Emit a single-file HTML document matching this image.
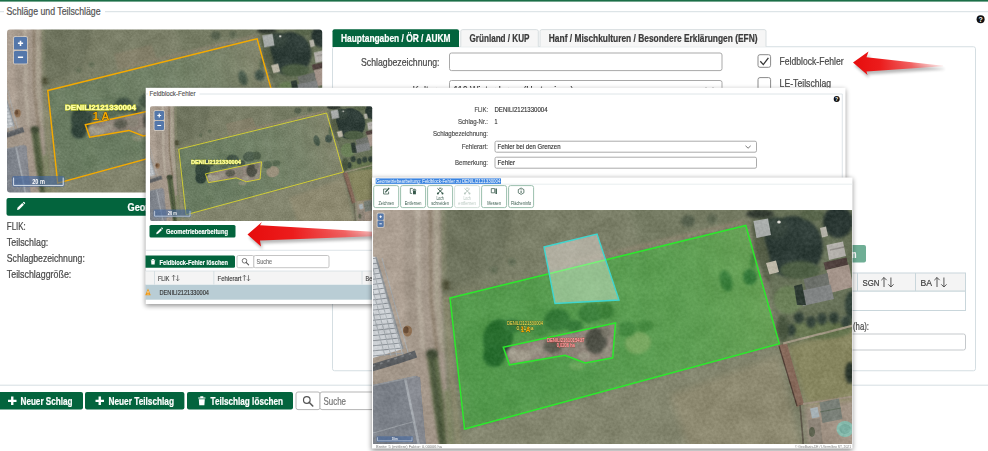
<!DOCTYPE html>
<html lang="de"><head><meta charset="utf-8"><title>Schläge und Teilschläge</title>
<style>
html,body{margin:0;padding:0;background:#fff;overflow:hidden}
svg{display:block;font-family:"Liberation Sans",sans-serif}
</style></head><body>
<svg width="988" height="451" viewBox="0 0 988 451">
<defs>
<filter id="b3" x="-10%" y="-10%" width="120%" height="120%" color-interpolation-filters="sRGB"><feGaussianBlur stdDeviation="3.2"/></filter>
<filter id="b15" x="-10%" y="-10%" width="120%" height="120%" color-interpolation-filters="sRGB"><feGaussianBlur stdDeviation="1.5"/></filter>
<filter id="b07" x="-10%" y="-10%" width="120%" height="120%" color-interpolation-filters="sRGB"><feGaussianBlur stdDeviation="0.7"/></filter>
<filter id="noise" x="0" y="0" width="100%" height="100%" color-interpolation-filters="sRGB"><feTurbulence type="fractalNoise" baseFrequency="0.33" numOctaves="2" seed="7" result="t"/><feColorMatrix in="t" type="matrix" values="1 0 0 0 0  1 0 0 0 0  1 0 0 0 0  0 0 0 0 1" result="n"/><feTurbulence type="fractalNoise" baseFrequency="0.05" numOctaves="2" seed="11" result="t2"/><feColorMatrix in="t2" type="matrix" values="1 0 0 0 0  1 0 0 0 0  1 0 0 0 0  0 0 0 0 1" result="n2"/><feComposite in="SourceGraphic" in2="n" operator="arithmetic" k1="0" k2="1" k3="0.11" k4="-0.055" result="c1"/><feComposite in="c1" in2="n2" operator="arithmetic" k1="0" k2="1" k3="0.09" k4="-0.045"/></filter>
<linearGradient id="pg" gradientUnits="userSpaceOnUse" x1="455" y1="360" x2="775" y2="280"><stop offset="0" stop-color="#6b7d62"/><stop offset="0.45" stop-color="#718167"/><stop offset="0.75" stop-color="#78836a"/><stop offset="1" stop-color="#86876f"/></linearGradient>
<g id="scene" filter="url(#noise)">
<g filter="url(#b3)">
<rect x="330" y="180" width="560" height="300" fill="#7b7f68"/>
<polygon points="440,180 520,180 500,270 445,290" fill="#666c55" opacity="0.55"/>
<polygon points="620,180 760,180 745,222 640,245" fill="#6e765d" opacity="0.4"/>
<polygon points="440,437 779,343.6 812,480 440,480" fill="#84866f"/>
<polygon points="670,395 779,355 808,480 700,480" fill="#908970" opacity="0.75"/>
<polygon points="745,180 890,180 890,345 781,347" fill="#687259"/>
<polygon points="786,345 890,318 890,396 806,406" fill="#86855f"/>
<polygon points="804,406 890,394 890,480 812,480" fill="#a09284"/>
</g>
<g filter="url(#b15)">
<polygon points="450,298 745.75,225.5 779.3,343.6 464.6,429" fill="url(#pg)"/>
<polygon points="455,330 560,300 600,380 470,420" fill="#687a60" opacity="0.55"/>
<path d="M560,266 L745,221.5" stroke="#8f8672" stroke-width="4" fill="none" opacity="0.8"/>
<polygon points="544,247 597,234 606,258 550,272" fill="#8a7f6a" opacity="0.55"/>
<path d="M452,295 L590,261" stroke="#80836b" stroke-width="3" fill="none" opacity="0.7"/>
<polygon points="330,180 441,180 442,300 452,480 330,480" fill="#a29689"/>
<polygon points="330,180 402,180 406,345 330,360" fill="#ada093"/>
<path d="M417,180 L419,300 L424,360" stroke="#b3a99b" stroke-width="5" fill="none"/>
<path d="M430,180 L431,300 L437,352" stroke="#80735f" stroke-width="2.2" fill="none"/>
<path d="M436,180 L437,300 L443,352" stroke="#a8a18f" stroke-width="5" fill="none"/>
<path d="M443,180 L444,290" stroke="#80826a" stroke-width="5" fill="none"/>
<path d="M446,296 L452,380 L462,480" stroke="#8c8b70" stroke-width="6" fill="none"/>
<polygon points="414,352 430,350 444,480 424,480" fill="#a39689"/>
</g>
<g filter="url(#b15)">
<polygon points="503.3,347.2 615.5,323 612.7,357.8 585.2,363 565,355.2 509.5,364.8" fill="#8f857a"/>
<ellipse cx="521" cy="356" rx="12" ry="6" fill="#a29c8d" transform="rotate(-10 521 356)"/>
<ellipse cx="512" cy="352" rx="5" ry="4" fill="#aaa596"/>
<ellipse cx="535" cy="350" rx="8" ry="4" fill="#948e80" transform="rotate(-10 535 350)"/>
<ellipse cx="553" cy="346" rx="10" ry="7" fill="#5f6054" transform="rotate(-10 553 346)"/>
<ellipse cx="571" cy="344" rx="8" ry="7" fill="#8d887b"/>
<ellipse cx="596" cy="341" rx="11" ry="13" fill="#4d4f45"/>
<ellipse cx="606" cy="332" rx="5" ry="6" fill="#7a776a"/>
<ellipse cx="607" cy="352" rx="5" ry="5" fill="#918d7e"/>
<ellipse cx="584" cy="356" rx="6" ry="4" fill="#9a9687"/>
<ellipse cx="638" cy="343" rx="13" ry="11" fill="#9a907c" transform="rotate(-10 638 343)"/>
<ellipse cx="627" cy="329" rx="9" ry="8" fill="#556651"/>
<ellipse cx="645" cy="326" rx="8" ry="6" fill="#5d6d56"/>
<ellipse cx="498" cy="338" rx="15" ry="19" fill="#35473c" transform="rotate(15 498 338)"/>
<ellipse cx="494" cy="356" rx="11" ry="11" fill="#31433a"/>
<ellipse cx="512" cy="326" rx="9" ry="7" fill="#44554a"/>
<ellipse cx="557" cy="320" rx="13" ry="11" fill="#455649" transform="rotate(-12 557 320)"/>
<ellipse cx="591" cy="313" rx="13" ry="10" fill="#4a5b4a" transform="rotate(-10 591 313)"/>
<ellipse cx="606" cy="311" rx="8" ry="8" fill="#50604c"/>
<ellipse cx="574" cy="326" rx="9" ry="6" fill="#46564a"/>
<ellipse cx="540" cy="330" rx="9" ry="6" fill="#586a55"/>
<ellipse cx="577" cy="366" rx="8" ry="4" fill="#8d917a"/>
<ellipse cx="726" cy="281" rx="6" ry="11" fill="#48594a" transform="rotate(-15 726 281)"/>
<ellipse cx="750" cy="277" rx="7" ry="8" fill="#43544a"/>
<ellipse cx="753" cy="262" rx="3" ry="9" fill="#5a6a52"/>
<ellipse cx="688" cy="221" rx="7" ry="6" fill="#545f4c"/>
<ellipse cx="712" cy="219" rx="5" ry="5" fill="#5a644f"/>
<ellipse cx="512" cy="262" rx="4" ry="4" fill="#616b54"/>
<ellipse cx="494" cy="270" rx="3.5" ry="4" fill="#616b54"/>
<ellipse cx="446" cy="285" rx="4" ry="5.5" fill="#55563f"/>
<polygon points="426.5,352 437,350 443.5,400 447,445 451,480 443,480 439,445 432.5,400" fill="#5a6646"/>
<path d="M431,353 L437,400 L442.5,445 L446,480" stroke="#48533b" stroke-width="3.6" fill="none"/>
<ellipse cx="432" cy="354" rx="6" ry="5" fill="#454f3a"/>
<path d="M447,390 L451,445 L455,480" stroke="#848a6a" stroke-width="6" fill="none"/>
<ellipse cx="793" cy="247" rx="30" ry="31" fill="#2e3c37"/>
<ellipse cx="800" cy="270" rx="20" ry="9" fill="#4e5f45"/>
<ellipse cx="775" cy="228" rx="13" ry="11" fill="#35433b"/>
<ellipse cx="838" cy="222" rx="15" ry="16" fill="#2a3733"/>
<ellipse cx="812" cy="215" rx="12" ry="6" fill="#566349"/>
<ellipse cx="852" cy="305" rx="7" ry="14" fill="#33433a"/>
<ellipse cx="788" cy="300" rx="14" ry="14" fill="#6b8058"/>
<ellipse cx="818" cy="330" rx="34" ry="9" fill="#66754f"/>
<ellipse cx="799" cy="318" rx="5" ry="6" fill="#34433a"/>
<ellipse cx="811" cy="322" rx="5" ry="6" fill="#34433a"/>
<ellipse cx="822" cy="319" rx="5" ry="6" fill="#34433a"/>
<ellipse cx="834" cy="318" rx="5" ry="6" fill="#34433a"/>
<ellipse cx="846" cy="322" rx="5" ry="6" fill="#34433a"/>
<ellipse cx="791" cy="330" rx="5" ry="6" fill="#34433a"/>
<ellipse cx="783" cy="328" rx="6" ry="13" fill="#495640"/>
<ellipse cx="850" cy="373" rx="5" ry="11" fill="#2b362d"/>
<ellipse cx="760" cy="214" rx="14" ry="4.5" fill="#30382f"/>
<ellipse cx="762" cy="252" rx="6" ry="32" fill="#555e47" transform="rotate(-15 762 252)"/>
</g>
<g filter="url(#b07)">
<polygon points="778.5,345 787,343.5 804,404 797,407" fill="#86695a"/>
<path d="M779,346 L797,406" stroke="#4f3f36" stroke-width="1.2" fill="none"/>
<path d="M800,405 L803,440 L804,480" stroke="#5b5548" stroke-width="1.6" fill="none"/>
<path d="M783,343.5 L890,316" stroke="#a39a86" stroke-width="2.2" fill="none"/>
<path d="M803,404 L890,391" stroke="#9c8f7e" stroke-width="2" fill="none"/>
<polygon points="330,250 376,257 403,349 373,358 330,368" fill="#cdd1d5"/>
<path d="M330,265 L377.0,258" stroke="#8d9399" stroke-width="1.0" fill="none"/>
<path d="M330,270 L378.42,263" stroke="#8d9399" stroke-width="1.0" fill="none"/>
<path d="M330,275 L379.84,268" stroke="#8d9399" stroke-width="1.0" fill="none"/>
<path d="M330,280 L381.26,273" stroke="#8d9399" stroke-width="1.0" fill="none"/>
<path d="M330,285 L382.68,278" stroke="#8d9399" stroke-width="1.0" fill="none"/>
<path d="M330,290 L384.1,283" stroke="#8d9399" stroke-width="1.0" fill="none"/>
<path d="M330,295 L385.52,288" stroke="#8d9399" stroke-width="1.0" fill="none"/>
<path d="M330,300 L386.94,293" stroke="#8d9399" stroke-width="1.0" fill="none"/>
<path d="M330,305 L388.36,298" stroke="#8d9399" stroke-width="1.0" fill="none"/>
<path d="M330,310 L389.78,303" stroke="#8d9399" stroke-width="1.0" fill="none"/>
<path d="M330,315 L391.2,308" stroke="#8d9399" stroke-width="1.0" fill="none"/>
<path d="M330,320 L392.62,313" stroke="#8d9399" stroke-width="1.0" fill="none"/>
<path d="M330,325 L394.04,318" stroke="#8d9399" stroke-width="1.0" fill="none"/>
<path d="M330,330 L395.46,323" stroke="#8d9399" stroke-width="1.0" fill="none"/>
<path d="M330,335 L396.88,328" stroke="#8d9399" stroke-width="1.0" fill="none"/>
<path d="M330,340 L398.3,333" stroke="#8d9399" stroke-width="1.0" fill="none"/>
<path d="M330,345 L399.72,338" stroke="#8d9399" stroke-width="1.0" fill="none"/>
<path d="M330,350 L401.14,343" stroke="#8d9399" stroke-width="1.0" fill="none"/>
<path d="M330,355 L402.56,348" stroke="#8d9399" stroke-width="1.0" fill="none"/>
<path d="M330,360 L403.98,353" stroke="#8d9399" stroke-width="1.0" fill="none"/>
<path d="M358,258 L385,356" stroke="#a3a9ae" stroke-width="0.9" fill="none"/>
<path d="M364,258 L391,356" stroke="#a3a9ae" stroke-width="0.9" fill="none"/>
<path d="M370,258 L397,356" stroke="#a3a9ae" stroke-width="0.9" fill="none"/>
<path d="M376,258 L403,356" stroke="#a3a9ae" stroke-width="0.9" fill="none"/>
<path d="M382,258 L409,356" stroke="#a3a9ae" stroke-width="0.9" fill="none"/>
<path d="M376,257 L403,349" stroke="#8d9296" stroke-width="1.6" fill="none"/>
<path d="M330,380 L373,367.5 L398,360 L416,354" stroke="#5c5f62" stroke-width="7.5" fill="none"/>
<path d="M373,366 L414,352.5" stroke="#7a7d80" stroke-width="1.6" fill="none" stroke-dasharray="2.5 5"/>
<ellipse cx="407.5" cy="331" rx="4.5" ry="5.5" fill="#8e6f52"/>
<ellipse cx="406" cy="330" rx="2.6" ry="3.6" fill="#6b4f38"/>
<polygon points="330,389 373,385 416,376 420,377.5 421.3,395 425.7,443.6 429,480 330,480" fill="#7c8189"/>
<polygon points="405,378.5 416,376 420,377.5 421.3,395 425.7,443.6 429,480 426,480 418.6,443.6 408.5,395" fill="#868990"/>
<path d="M405,378 L408.5,395 L418.6,443.6 L426,480" stroke="#a3a8ae" stroke-width="2.4" fill="none"/>
<path d="M373,433 L414,421.5" stroke="#979ca2" stroke-width="1.2" fill="none"/>
<path d="M330,390 L373,385.5 L416,376.5" stroke="#93979c" stroke-width="1.3" fill="none"/>
<polygon points="753.4,221 768,218.5 771,235 756.5,238" fill="#a9adab"/>
<polygon points="826.5,245 843,241.5 846,256 829,260" fill="#b3b0ab"/>
<path d="M830,250 L844,247" stroke="#8e8a86" stroke-width="1.5" fill="none"/>
<polygon points="823.5,262.5 846.5,257.5 848,265 825.5,270" fill="#4f403d"/>
<polygon points="826.5,270 849,264.5 853,287 830.5,293" fill="#a5958b"/>
<polygon points="803.5,279 827.5,273 830,287 806.5,292" fill="#6c706a"/>
<polygon points="799,291 830.5,284.5 834,299 803,306" fill="#828585"/>
<polygon points="794,286 802,284 806,305 797,305" fill="#2e3b33"/>
<polygon points="766,263 776,260.5 779,272 769.5,274.5" fill="#bdb8a8"/>
<polygon points="820,228 826,226.5 828,236 822,237.5" fill="#b5b3a9"/>
<ellipse cx="779" cy="222" rx="1.8" ry="1.5" fill="#d8d6cf"/>
<polygon points="819.5,402.5 839,398.5 842.5,419 822.5,423" fill="#7a8078"/>
<path d="M820,412 L841,408" stroke="#5f6b5b" stroke-width="1" fill="none"/>
<polygon points="810,408.5 817.5,407 819.5,417 812,418.5" fill="#a3aeb3"/>
<ellipse cx="845" cy="429" rx="8.5" ry="8" fill="#83b7a9"/>
<ellipse cx="845" cy="429" rx="5.5" ry="5" fill="#74a99c"/>
<polygon points="808,420 820,418 823,445 811,446" fill="#8c8377"/>
<ellipse cx="812" cy="432" rx="3" ry="5" fill="#5a5f4c"/>
</g>
</g>
<clipPath id="cm1"><rect x="7" y="29.5" width="315.2" height="162.9" rx="3"/></clipPath>
<clipPath id="cm2"><rect x="150" y="106.25" width="222.2" height="114.8" rx="2"/></clipPath>
<clipPath id="cm3"><rect x="373.5" y="210" width="478" height="234"/></clipPath>
<filter id="sh" x="-5%" y="-5%" width="110%" height="115%"><feGaussianBlur stdDeviation="2.5"/></filter>
<filter id="sh2" x="-20%" y="-50%" width="140%" height="220%"><feGaussianBlur stdDeviation="1.8"/></filter>
<linearGradient id="arr" gradientUnits="userSpaceOnUse" x1="853" y1="0" x2="943" y2="0"><stop offset="0" stop-color="#e60c0c"/><stop offset="0.3" stop-color="#ec1c1c"/><stop offset="0.65" stop-color="#f25454" stop-opacity="0.9"/><stop offset="1" stop-color="#f8b0b0" stop-opacity="0.35"/></linearGradient>
<linearGradient id="arr2" gradientUnits="userSpaceOnUse" x1="247" y1="0" x2="398" y2="0"><stop offset="0" stop-color="#e60c0c"/><stop offset="0.3" stop-color="#ec1c1c"/><stop offset="0.65" stop-color="#f25454" stop-opacity="0.9"/><stop offset="1" stop-color="#f8b0b0" stop-opacity="0.35"/></linearGradient>
</defs>
<rect x="0" y="0" width="988" height="451" fill="#fff"/>
<rect x="0" y="0" width="988" height="1.6" fill="#1b6e47"/>
<line x1="0" y1="11.7" x2="4" y2="11.7" stroke="#d5dee2" stroke-width="1"/>
<line x1="105" y1="11.7" x2="988" y2="11.7" stroke="#d5dee2" stroke-width="1"/>
<text x="6.5" y="15.2" font-size="10.06" fill="#555" textLength="94" lengthAdjust="spacingAndGlyphs" stroke="#555" stroke-width="0.221">Schläge und Teilschläge</text>
<circle cx="980.6" cy="19.3" r="4" fill="#111"/><text x="980.6" y="21.78" font-size="7.0" font-weight="bold" fill="#fff" text-anchor="middle">?</text>
<g clip-path="url(#cm1)">
<use href="#scene" transform="translate(-270.5,-120.7) scale(0.707)"/>
<polygon points="47.8,90.5 257.1,38.8 280.47,122.23 57.7,183.1" fill="none" stroke="#f4aa00" stroke-width="1.45"/>
<polygon points="85.33,124.77 164.66,107.66 162.68,132.26 143.24,135.94 128.95,130.43 89.72,137.21" fill="none" stroke="#f4aa00" stroke-width="1.45"/>
<text x="65" y="110.4" font-size="8" fill="#ffffb4" font-weight="bold" textLength="71" lengthAdjust="spacingAndGlyphs" stroke="#e2e230" stroke-width="0.9" paint-order="stroke">DENILI2121330004</text>
<text x="92.7" y="119.8" font-size="11" fill="#f5a800" font-weight="bold" textLength="16.6" lengthAdjust="spacingAndGlyphs" stroke="#4a3200" stroke-width="0.7" paint-order="stroke">1 A</text>
<rect x="12.2" y="176" width="52.4" height="10.8" fill="#3f66a2" rx="1.8" opacity="0.6"/>
<path d="M13.6,177.6 V185.4 H63.2 V177.6" fill="none" stroke="#e8eef5" stroke-width="0.9"/>
<text x="38.6" y="184.2" font-size="7" fill="#fff" font-weight="bold" text-anchor="middle" textLength="12.7" lengthAdjust="spacingAndGlyphs">20 m</text>
<rect x="13" y="36" width="15" height="28.599999999999998" rx="2" fill="#fff" opacity="0.4"/><rect x="14" y="37" width="13" height="12.6" rx="1.2" fill="#5477aa"/><rect x="14" y="51.0" width="13" height="12.6" rx="1.2" fill="#5477aa"/><path d="M17.9,43.3 H23.1 M20.5,40.699999999999996 V45.9" stroke="#fff" stroke-width="1.56"/><path d="M17.9,57.3 H23.1" stroke="#fff" stroke-width="1.56"/>
</g>
<rect x="6.5" y="198" width="320" height="17.8" fill="#03643d" rx="2"/>
<g transform="translate(16.5,202) scale(0.53125)" fill="#fff"><path d="M1,15 L1.8,11 L10.8,2 L14,5.2 L5,14.2 Z"/><path d="M11.8,1 L13,-0.2 Q13.8,-0.8 14.6,0 L16,1.4 Q16.8,2.2 16,3 L15,4.2 Z"/></g>
<text x="127.5" y="211" font-size="10.94" fill="#fff" font-weight="bold" textLength="98" lengthAdjust="spacingAndGlyphs" stroke="#fff" stroke-width="0.241">Geometriebearbeitung</text>
<text x="6.8" y="229.6" font-size="10.5" fill="#4a4a4a" textLength="19" lengthAdjust="spacingAndGlyphs" stroke="#4a4a4a" stroke-width="0.231">FLIK:</text>
<text x="6.8" y="245.79999999999998" font-size="10.5" fill="#4a4a4a" textLength="41.5" lengthAdjust="spacingAndGlyphs" stroke="#4a4a4a" stroke-width="0.231">Teilschlag:</text>
<text x="6.8" y="262.0" font-size="10.5" fill="#4a4a4a" textLength="78" lengthAdjust="spacingAndGlyphs" stroke="#4a4a4a" stroke-width="0.231">Schlagbezeichnung:</text>
<text x="6.8" y="278.2" font-size="10.5" fill="#4a4a4a" textLength="64.5" lengthAdjust="spacingAndGlyphs" stroke="#4a4a4a" stroke-width="0.231">Teilschlaggröße:</text>
<rect x="332.5" y="46.75" width="643" height="324" fill="#fff" stroke="#d5dee2" stroke-width="1" rx="2"/>
<path d="M332.5,47 V31.2 Q332.5,29.2 334.5,29.2 H457 Q459,29.2 459,31.2 V47 Z" fill="#03643d"/>
<text x="341" y="42.3" font-size="10.5" fill="#fff" font-weight="bold" textLength="109.5" lengthAdjust="spacingAndGlyphs" stroke="#fff" stroke-width="0.231">Hauptangaben / ÖR / AUKM</text>
<path d="M460.8,46.75 V31.2 Q460.8,29.6 462.8,29.6 H536.3 Q538.3,29.6 538.3,31.2 V46.75" fill="#f6f6f6" stroke="#d5dbde" stroke-width="0.9"/>
<text x="469.5" y="42.3" font-size="10.5" fill="#3a3a3a" font-weight="bold" textLength="60" lengthAdjust="spacingAndGlyphs" stroke="#3a3a3a" stroke-width="0.231">Grünland / KUP</text>
<path d="M540,46.75 V31.2 Q540,29.6 542,29.6 H764 Q766,29.6 766,31.2 V46.75" fill="#f6f6f6" stroke="#d5dbde" stroke-width="0.9"/>
<text x="548.8" y="42.3" font-size="10.5" fill="#3a3a3a" font-weight="bold" textLength="208.7" lengthAdjust="spacingAndGlyphs" stroke="#3a3a3a" stroke-width="0.231">Hanf / Mischkulturen / Besondere Erklärungen (EFN)</text>
<text x="439.5" y="66" font-size="10.94" fill="#4a4a4a" text-anchor="end" textLength="78.5" lengthAdjust="spacingAndGlyphs" stroke="#4a4a4a" stroke-width="0.241">Schlagbezeichnung:</text>
<rect x="449.5" y="53" width="272.5" height="17.6" fill="#fff" stroke="#a9a9a9" stroke-width="1" rx="2"/>
<text x="439.5" y="94" font-size="10.94" fill="#4a4a4a" text-anchor="end" textLength="27" lengthAdjust="spacingAndGlyphs" stroke="#4a4a4a" stroke-width="0.241">Kultur:</text>
<rect x="449.5" y="80.5" width="272.5" height="17.6" fill="#fff" stroke="#a9a9a9" stroke-width="1" rx="2"/>
<text x="453.5" y="94" font-size="10.94" fill="#333" textLength="120" lengthAdjust="spacingAndGlyphs" stroke="#333" stroke-width="0.241">110 Winterdurum (Hartweizen)</text>
<path d="M706,87.5 l3.5,3.5 l3.5,-3.5" fill="none" stroke="#555" stroke-width="1"/>
<rect x="758" y="54.7" width="12.6" height="12.6" fill="#fff" stroke="#8a8a8a" stroke-width="1" rx="2"/>
<path d="M760.3,61.3 L763.3,64.6 L768.4,57.8" fill="none" stroke="#333" stroke-width="1.3"/>
<text x="779.6" y="64.8" font-size="10.5" fill="#4a4a4a" textLength="64" lengthAdjust="spacingAndGlyphs" stroke="#4a4a4a" stroke-width="0.231">Feldblock-Fehler</text>
<rect x="758" y="77.6" width="12.6" height="12.6" fill="#fff" stroke="#8a8a8a" stroke-width="1" rx="2"/>
<text x="779.6" y="86.6" font-size="10.5" fill="#4a4a4a" textLength="51.5" lengthAdjust="spacingAndGlyphs" stroke="#4a4a4a" stroke-width="0.231">LE-Teilschlag</text>
<path d="M853,62.5 L868.5,51.6 L866.5,57.2 L943,65.7 L943,66.3 L866.5,71.6 L867.5,75 Z" fill="#000" opacity="0.28" filter="url(#sh2)" transform="translate(1.5,3)"/><path d="M853,62.5 L868.5,51.6 L866.5,57.2 L943,65.7 L943,66.3 L866.5,71.6 L867.5,75 Z" fill="url(#arr)"/>
<rect x="800" y="245" width="66" height="17.5" fill="#6fae95" rx="2"/>
<text x="856.5" y="258" font-size="10.5" fill="#fff" font-weight="bold" text-anchor="end" textLength="5" lengthAdjust="spacingAndGlyphs" stroke="#fff" stroke-width="0.231">n</text>
<rect x="780" y="273" width="185.5" height="18.2" fill="#f4f4f4" stroke="#c9d6db" stroke-width="1"/>
<line x1="857.5" y1="273" x2="857.5" y2="291.2" stroke="#c9d6db" stroke-width="1"/>
<line x1="915.5" y1="273" x2="915.5" y2="291.2" stroke="#c9d6db" stroke-width="1"/>
<text x="862.5" y="286.2" font-size="9.19" fill="#3f3f3f" textLength="17" lengthAdjust="spacingAndGlyphs" stroke="#3f3f3f" stroke-width="0.202">SGN</text>
<path d="M884,287.0 V277.5 M881.34,280.16 L884,277.5 L886.66,280.16  M890.916,277.5 V287.0 M888.256,284.34 L890.916,287.0 L893.576,284.34" fill="none" stroke="#444" stroke-width="0.9"/>
<text x="920.5" y="286.2" font-size="9.19" fill="#3f3f3f" textLength="11.5" lengthAdjust="spacingAndGlyphs" stroke="#3f3f3f" stroke-width="0.202">BA</text>
<path d="M937,287.0 V277.5 M934.34,280.16 L937,277.5 L939.66,280.16  M943.916,277.5 V287.0 M941.256,284.34 L943.916,287.0 L946.576,284.34" fill="none" stroke="#444" stroke-width="0.9"/>
<rect x="780" y="291.2" width="185.5" height="19.3" fill="#fff" stroke="#c9d6db" stroke-width="1"/>
<text x="853" y="330.2" font-size="10.5" fill="#4a4a4a" textLength="16" lengthAdjust="spacingAndGlyphs" stroke="#4a4a4a" stroke-width="0.231">(ha):</text>
<rect x="780" y="334" width="185.5" height="16" fill="#fff" stroke="#c5c9cc" stroke-width="1" rx="2"/>
<line x1="0" y1="385.2" x2="988" y2="385.2" stroke="#d5dee2" stroke-width="1"/>
<rect x="-3" y="392" width="86" height="17.6" fill="#03643d" rx="2"/>
<path d="M11.06,396.6 h2.3800000000000003 v3.0599999999999996 h3.0599999999999996 v2.3800000000000003 h-3.0599999999999996 v3.0599999999999996 h-2.3800000000000003 v-3.0599999999999996 h-3.0599999999999996 v-2.3800000000000003 h3.0599999999999996 Z" fill="#fff"/>
<text x="20.5" y="405.4" font-size="10.5" fill="#fff" font-weight="bold" textLength="52" lengthAdjust="spacingAndGlyphs" stroke="#fff" stroke-width="0.231">Neuer Schlag</text>
<rect x="85" y="392" width="99.4" height="17.6" fill="#03643d" rx="2"/>
<path d="M98.56,396.6 h2.3800000000000003 v3.0599999999999996 h3.0599999999999996 v2.3800000000000003 h-3.0599999999999996 v3.0599999999999996 h-2.3800000000000003 v-3.0599999999999996 h-3.0599999999999996 v-2.3800000000000003 h3.0599999999999996 Z" fill="#fff"/>
<text x="108.5" y="405.4" font-size="10.5" fill="#fff" font-weight="bold" textLength="65.5" lengthAdjust="spacingAndGlyphs" stroke="#fff" stroke-width="0.231">Neuer Teilschlag</text>
<rect x="187" y="392" width="106" height="17.6" fill="#03643d" rx="2"/>
<g transform="translate(197,395.6) scale(0.6)" fill="#fff"><path d="M2,3 H14 V5 H2 Z M5.5,1 H10.5 V3 H5.5 Z M3,6 H13 L12.3,16 H3.7 Z"/></g>
<text x="210.5" y="405.4" font-size="10.5" fill="#fff" font-weight="bold" textLength="72.5" lengthAdjust="spacingAndGlyphs" stroke="#fff" stroke-width="0.231">Teilschlag löschen</text>
<rect x="296" y="392" width="24" height="17.6" fill="#fff" stroke="#b5b5b5" stroke-width="1" rx="2"/>
<circle cx="306.8" cy="400" r="3.3" fill="none" stroke="#555" stroke-width="1.2"/><path d="M309.11,402.31 L312.74,405.94" stroke="#555" stroke-width="1.56" stroke-linecap="round"/>
<rect x="320" y="392" width="120" height="17.6" fill="#fff" stroke="#b5b5b5" stroke-width="1" rx="2"/>
<text x="323.5" y="405.4" font-size="10.06" fill="#777" textLength="22.5" lengthAdjust="spacingAndGlyphs" stroke="#777" stroke-width="0.221">Suche</text>
<defs><clipPath id="cp1"><rect x="145.5" y="87.5" width="700" height="216.5"/></clipPath></defs><rect x="145.5" y="89.5" width="700" height="216.5" fill="#000" opacity="0.42" filter="url(#sh)"/>
<rect x="145.7" y="87.8" width="699.8" height="216.2" fill="#fff"/>
<line x1="145.7" y1="94" x2="148" y2="94" stroke="#d5dee2" stroke-width="0.8"/>
<line x1="199.5" y1="94" x2="842.3" y2="94" stroke="#d5dee2" stroke-width="0.8"/>
<line x1="842.3" y1="94" x2="842.3" y2="250" stroke="#d5dee2" stroke-width="0.8"/>
<text x="149.5" y="96.3" font-size="7.26" fill="#555" textLength="46" lengthAdjust="spacingAndGlyphs" stroke="#555" stroke-width="0.16">Feldblock-Fehler</text>
<circle cx="836.7" cy="99" r="3" fill="#111"/><text x="836.7" y="100.86" font-size="5.25" font-weight="bold" fill="#fff" text-anchor="middle">?</text>
<g clip-path="url(#cm2)">
<use href="#scene" transform="translate(-46.25,0.25) scale(0.5)"/>
<polygon points="178.75,149.25 326.62,113.0 343.4,172.05 186.05,214.75" fill="none" stroke="#e6e02a" stroke-width="0.8"/>
<polygon points="205.4,173.85 261.5,161.75 260.1,179.15 246.35,181.75 236.25,177.85 208.5,182.65" fill="none" stroke="#e6e02a" stroke-width="0.8"/>
<text x="191" y="163.8" font-size="5.8" fill="#ffffb4" font-weight="bold" textLength="50" lengthAdjust="spacingAndGlyphs" stroke="#e2e230" stroke-width="0.55" paint-order="stroke">DENILI2121330004</text>
<rect x="153.6" y="209.6" width="37.4" height="7.6" fill="#3f66a2" rx="1.3" opacity="0.55"/>
<path d="M154.6,210.8 V216.2 H190 V210.8" fill="none" stroke="#e8eef5" stroke-width="0.65"/>
<text x="172.3" y="215.4" font-size="5" fill="#fff" font-weight="bold" text-anchor="middle" textLength="9" lengthAdjust="spacingAndGlyphs">20 m</text>
<rect x="153.5" y="110" width="11.5" height="21" rx="2" fill="#fff" opacity="0.4"/><rect x="154.5" y="111" width="9.5" height="9" rx="1.2" fill="#5477aa"/><rect x="154.5" y="121" width="9.5" height="9" rx="1.2" fill="#5477aa"/><path d="M157.35,115.5 H161.15 M159.25,113.6 V117.4" stroke="#fff" stroke-width="1.14"/><path d="M157.35,125.5 H161.15" stroke="#fff" stroke-width="1.14"/>
</g>
<text x="488" y="112.1" font-size="7.52" fill="#4a4a4a" text-anchor="end" textLength="13.5" lengthAdjust="spacingAndGlyphs" stroke="#4a4a4a" stroke-width="0.165">FLIK:</text>
<text x="494.5" y="112.1" font-size="7.52" fill="#333" textLength="53" lengthAdjust="spacingAndGlyphs" stroke="#333" stroke-width="0.165">DENILI2121330004</text>
<text x="488" y="123.7" font-size="7.52" fill="#4a4a4a" text-anchor="end" textLength="30" lengthAdjust="spacingAndGlyphs" stroke="#4a4a4a" stroke-width="0.165">Schlag-Nr.:</text>
<text x="494.5" y="123.7" font-size="7.52" fill="#333" textLength="3" lengthAdjust="spacingAndGlyphs" stroke="#333" stroke-width="0.165">1</text>
<text x="488" y="135.5" font-size="7.52" fill="#4a4a4a" text-anchor="end" textLength="55" lengthAdjust="spacingAndGlyphs" stroke="#4a4a4a" stroke-width="0.165">Schlagbezeichnung:</text>
<text x="488" y="149.1" font-size="7.52" fill="#4a4a4a" text-anchor="end" textLength="26.3" lengthAdjust="spacingAndGlyphs" stroke="#4a4a4a" stroke-width="0.165">Fehlerart:</text>
<rect x="495" y="141.2" width="261.5" height="11" fill="#fff" stroke="#a0a0a0" stroke-width="0.9" rx="1.5"/>
<text x="497.5" y="149.3" font-size="7.52" fill="#333" textLength="63" lengthAdjust="spacingAndGlyphs" stroke="#333" stroke-width="0.165">Fehler bei den Grenzen</text>
<path d="M745.5,145.8 l2.6,2.4 l2.6,-2.4" fill="none" stroke="#555" stroke-width="0.8"/>
<text x="488" y="164.8" font-size="7.52" fill="#4a4a4a" text-anchor="end" textLength="33" lengthAdjust="spacingAndGlyphs" stroke="#4a4a4a" stroke-width="0.165">Bemerkung:</text>
<rect x="495" y="157.2" width="261.5" height="11" fill="#fff" stroke="#a0a0a0" stroke-width="0.9" rx="1.5"/>
<text x="497.5" y="164.9" font-size="7.52" fill="#333" textLength="17.5" lengthAdjust="spacingAndGlyphs" stroke="#333" stroke-width="0.165">Fehler</text>
<rect x="149.5" y="225" width="86" height="12.5" fill="#03643d" rx="1.5"/>
<g transform="translate(155.8,227.6) scale(0.4375)" fill="#fff"><path d="M1,15 L1.8,11 L10.8,2 L14,5.2 L5,14.2 Z"/><path d="M11.8,1 L13,-0.2 Q13.8,-0.8 14.6,0 L16,1.4 Q16.8,2.2 16,3 L15,4.2 Z"/></g>
<text x="166" y="234.3" font-size="7.52" fill="#fff" font-weight="bold" textLength="62" lengthAdjust="spacingAndGlyphs" stroke="#fff" stroke-width="0.165">Geometriebearbeitung</text>
<line x1="145.5" y1="250.3" x2="845.5" y2="250.3" stroke="#d5dee2" stroke-width="0.8"/>
<rect x="143" y="255.5" width="92" height="12.2" fill="#03643d" rx="1.5" clip-path="url(#cp1)"/>
<g transform="translate(150,258.6) scale(0.375)" fill="#fff"><path d="M2,3 H14 V5 H2 Z M5.5,1 H10.5 V3 H5.5 Z M3,6 H13 L12.3,16 H3.7 Z"/></g>
<text x="159.5" y="264.6" font-size="7.52" fill="#fff" font-weight="bold" textLength="68.5" lengthAdjust="spacingAndGlyphs" stroke="#fff" stroke-width="0.165">Feldblock-Fehler löschen</text>
<rect x="237" y="255.5" width="17" height="12.2" fill="#fff" stroke="#b5b5b5" stroke-width="0.8" rx="1.5"/>
<circle cx="244.5" cy="260.8" r="2.3" fill="none" stroke="#555" stroke-width="0.8"/><path d="M246.11,262.41 L248.64,264.94" stroke="#555" stroke-width="1.04" stroke-linecap="round"/>
<rect x="253.8" y="255.5" width="75.2" height="12.2" fill="#fff" stroke="#b5b5b5" stroke-width="0.8" rx="1.5"/>
<text x="256.5" y="264.4" font-size="7.17" fill="#777" textLength="15.5" lengthAdjust="spacingAndGlyphs" stroke="#777" stroke-width="0.158">Suche</text>
<rect x="145.5" y="271" width="700" height="13.5" fill="#f4f4f4"/>
<line x1="145.5" y1="271" x2="845.5" y2="271" stroke="#d5dee2" stroke-width="0.8"/>
<line x1="154.5" y1="271" x2="154.5" y2="284.5" stroke="#d0dade" stroke-width="0.8"/>
<line x1="213.8" y1="271" x2="213.8" y2="284.5" stroke="#d0dade" stroke-width="0.8"/>
<line x1="362" y1="271" x2="362" y2="284.5" stroke="#d0dade" stroke-width="0.8"/>
<text x="158" y="280.6" font-size="6.65" fill="#3f3f3f" textLength="11.5" lengthAdjust="spacingAndGlyphs" stroke="#3f3f3f" stroke-width="0.146">FLIK</text>
<path d="M173.6,280.8 V275.2 M172.03199999999998,276.768 L173.6,275.2 L175.168,276.768  M177.6768,275.2 V280.8 M176.1088,279.232 L177.6768,280.8 L179.2448,279.232" fill="none" stroke="#444" stroke-width="0.65"/>
<text x="217.5" y="280.6" font-size="6.65" fill="#3f3f3f" textLength="24" lengthAdjust="spacingAndGlyphs" stroke="#3f3f3f" stroke-width="0.146">Fehlerart</text>
<path d="M244.4,280.8 V275.2 M242.832,276.768 L244.4,275.2 L245.96800000000002,276.768  M248.4768,275.2 V280.8 M246.9088,279.232 L248.4768,280.8 L250.0448,279.232" fill="none" stroke="#444" stroke-width="0.65"/>
<text x="365.5" y="280.6" font-size="6.65" fill="#3f3f3f" textLength="28" lengthAdjust="spacingAndGlyphs" stroke="#3f3f3f" stroke-width="0.146">Bemerkung</text>
<rect x="145.5" y="284.7" width="700" height="15" fill="#b9cdd5"/>
<path d="M145.2,295.2 L148,288.6 L150.8,295.2 Z" fill="#ee9a1c"/><path d="M148,291 V293.3 M148,294 v0.6" stroke="#fff" stroke-width="0.7"/>
<text x="159.5" y="295" font-size="6.83" fill="#333" textLength="49.5" lengthAdjust="spacingAndGlyphs" stroke="#333" stroke-width="0.15">DENILI2121330004</text>
<path d="M247.5,234.5 L262,222 L260,225.3 L373,231.8 L373,236.2 L260,240.5 L261,246.5 Z" fill="#000" opacity="0.28" filter="url(#sh2)" transform="translate(1.5,3)"/><path d="M247.5,234.5 L262,222 L260,225.3 L373,231.8 L373,236.2 L260,240.5 L261,246.5 Z" fill="url(#arr2)"/>
<rect x="371.5" y="178.5" width="481" height="272" fill="#000" opacity="0.45" filter="url(#sh)"/>
<rect x="372" y="177.5" width="480.5" height="271" fill="#fff"/>
<line x1="372" y1="184.2" x2="852.5" y2="184.2" stroke="#dfe7ea" stroke-width="0.7"/>
<rect x="375.7" y="178.4" width="125.3" height="5.5" fill="#3b84e0"/>
<text x="376.2" y="182.9" font-size="5.3" fill="#fff" textLength="124.2" lengthAdjust="spacingAndGlyphs">Geometriebearbeitung: Feldblock-Fehler zu DENILI2121330004</text>
<rect x="373.7" y="185.6" width="25" height="22" fill="#fff" stroke="#9bbfae" stroke-width="1" rx="2"/><text x="386.2" y="204.9" font-size="5.3" fill="#35584a" text-anchor="middle" textLength="15.5" lengthAdjust="spacingAndGlyphs">Zeichnen</text><path d="M386.7,189.0 H383.59999999999997 V194.0 H388.59999999999997 V191.6" fill="none" stroke="#35584a" stroke-width="0.75"/><path d="M385.3,192.39999999999998 L389.2,188.0" stroke="#35584a" stroke-width="1.3"/>
<rect x="400.6" y="185.6" width="25" height="22" fill="#fff" stroke="#9bbfae" stroke-width="1" rx="2"/><text x="413.1" y="204.9" font-size="5.3" fill="#35584a" text-anchor="middle" textLength="16.8" lengthAdjust="spacingAndGlyphs">Entfernen</text><path d="M412.8,188.39999999999998 H410.3 V193.39999999999998 H412.1" fill="none" stroke="#35584a" stroke-width="0.75"/><path d="M412.5,190.2 H416.3 M413.6,190.2 V189.2 H415.20000000000005 V190.2" fill="none" stroke="#35584a" stroke-width="0.75"/><rect x="413.0" y="190.89999999999998" width="2.9" height="3.4" fill="#35584a"/>
<rect x="427.6" y="185.6" width="25" height="22" fill="#fff" stroke="#9bbfae" stroke-width="1" rx="2"/><text x="440.1" y="199.9" font-size="5.3" fill="#35584a" text-anchor="middle" textLength="7.3" lengthAdjust="spacingAndGlyphs">Loch</text><text x="440.1" y="204.9" font-size="5.3" fill="#35584a" text-anchor="middle" textLength="17.5" lengthAdjust="spacingAndGlyphs">schneiden</text><path d="M437.5,188.39999999999998 L442.5,193.2 M442.70000000000005,188.79999999999998 L437.90000000000003,193.39999999999998" stroke="#35584a" stroke-width="1"/><circle cx="437.90000000000003" cy="193.5" r="1" fill="#35584a"/><circle cx="442.5" cy="193.5" r="1" fill="#35584a"/><path d="M439.1,188.2 h2.4" stroke="#35584a" stroke-width="0.9"/>
<rect x="454.6" y="185.6" width="25" height="22" fill="#fff" stroke="#d3e0d9" stroke-width="1" rx="2"/><text x="467.1" y="199.9" font-size="5.3" fill="#b9c8c0" text-anchor="middle" textLength="7.3" lengthAdjust="spacingAndGlyphs">Loch</text><text x="467.1" y="204.9" font-size="5.3" fill="#b9c8c0" text-anchor="middle" textLength="17.5" lengthAdjust="spacingAndGlyphs">entfernen</text><path d="M464.5,188.39999999999998 L469.5,193.2 M469.70000000000005,188.79999999999998 L464.90000000000003,193.39999999999998" stroke="#b9c8c0" stroke-width="1"/><circle cx="464.90000000000003" cy="193.5" r="1" fill="#b9c8c0"/><circle cx="469.5" cy="193.5" r="1" fill="#b9c8c0"/><path d="M466.1,188.2 h2.4" stroke="#b9c8c0" stroke-width="0.9"/>
<rect x="481.6" y="185.6" width="25" height="22" fill="#fff" stroke="#9bbfae" stroke-width="1" rx="2"/><text x="494.1" y="204.9" font-size="5.3" fill="#35584a" text-anchor="middle" textLength="13.8" lengthAdjust="spacingAndGlyphs">Messen</text><path d="M491.3,188.6 H494.70000000000005 V192.79999999999998 H491.3 Z" fill="none" stroke="#35584a" stroke-width="0.75"/><path d="M495.5,188.39999999999998 H496.90000000000003 V194.0 H495.5 Z" fill="#35584a"/>
<rect x="508.6" y="185.6" width="25" height="22" fill="#fff" stroke="#9bbfae" stroke-width="1" rx="2"/><text x="521.1" y="204.9" font-size="5.3" fill="#35584a" text-anchor="middle" textLength="20.3" lengthAdjust="spacingAndGlyphs">Flächeninfo</text><path d="M521.1,188.0 L523.9,189.6 V192.79999999999998 L521.1,194.39999999999998 L518.3000000000001,192.79999999999998 V189.6 Z" fill="none" stroke="#35584a" stroke-width="0.75"/><path d="M521.1,190.79999999999998 V193.0 M521.1,189.39999999999998 v0.8" stroke="#35584a" stroke-width="0.9"/>
<g clip-path="url(#cm3)">
<use href="#scene"/>
<path d="M450,298 L745.75,225.5 L779.3,343.6 L464.6,429 Z M503.3,347.2 L615.5,323 L612.7,357.8 L585.2,363 L565,355.2 L509.5,364.8 Z" fill="#00ff00" fill-opacity="0.215" fill-rule="evenodd" stroke="#2ce82c" stroke-width="1.5"/>
<polygon points="544,247 597,234 619,300 555,303.5" fill="#fff" fill-opacity="0.36" stroke="#3fd6cf" stroke-width="1.4"/>
<text x="525" y="324.6" font-size="4.7" fill="#ffff66" text-anchor="middle" textLength="36" lengthAdjust="spacingAndGlyphs" stroke="#3c3c10" stroke-width="0.5" paint-order="stroke">DENILI2121330004</text>
<text x="525" y="329.6" font-size="4.7" fill="#ffff66" text-anchor="middle" textLength="17" lengthAdjust="spacingAndGlyphs" stroke="#3c3c10" stroke-width="0.5" paint-order="stroke">0,31 ha</text>
<text x="525.5" y="332" font-size="7.3" fill="#f5a800" font-weight="bold" text-anchor="middle" textLength="9.6" lengthAdjust="spacingAndGlyphs" stroke="#5a3800" stroke-width="0.5" paint-order="stroke">1 A</text>
<text x="565.7" y="342.2" font-size="4.7" fill="#ffd0d0" text-anchor="middle" textLength="37.5" lengthAdjust="spacingAndGlyphs" stroke="#c02020" stroke-width="0.45" paint-order="stroke">DENILI2161015437</text>
<text x="565.7" y="346.8" font-size="4.7" fill="#ffd0d0" text-anchor="middle" textLength="18" lengthAdjust="spacingAndGlyphs" stroke="#c02020" stroke-width="0.45" paint-order="stroke">0,0206 ha</text>
<rect x="376.5" y="436.2" width="36.6" height="5.9" fill="#3f66a2" rx="1" opacity="0.55"/>
<path d="M377.5,437.3 V440.8 H412 V437.3" fill="none" stroke="#e8eef5" stroke-width="0.5"/>
<text x="394.7" y="440.4" font-size="3.4" fill="#fff" font-weight="bold" text-anchor="middle" textLength="6" lengthAdjust="spacingAndGlyphs">10 m</text>
<rect x="376.5" y="212.5" width="8.2" height="15.5" rx="2" fill="#fff" opacity="0.4"/><rect x="377.5" y="213.5" width="6.2" height="6.4" rx="1.2" fill="#5477aa"/><rect x="377.5" y="220.6" width="6.2" height="6.4" rx="1.2" fill="#5477aa"/><path d="M379.36,216.7 H381.84000000000003 M380.6,215.45999999999998 V217.94" stroke="#fff" stroke-width="0.9"/><path d="M379.36,223.79999999999998 H381.84000000000003" stroke="#fff" stroke-width="0.9"/>
</g>
<text x="376" y="448.2" font-size="3.6" fill="#777" textLength="66" lengthAdjust="spacingAndGlyphs">Breite: 5 (mittlere)  Faktor: 0,00006 ha</text>
<text x="851" y="448.2" font-size="3.6" fill="#777" text-anchor="end" textLength="56" lengthAdjust="spacingAndGlyphs">© GeoBasis-DE / LVermGeo ST, 2021</text>
</svg>
</body></html>
